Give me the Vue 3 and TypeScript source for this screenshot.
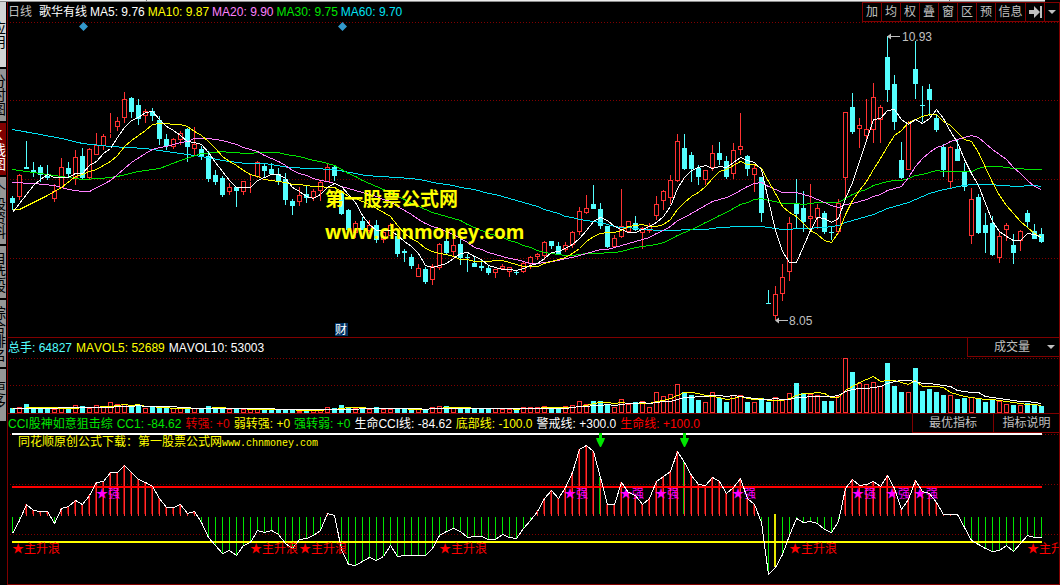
<script setup lang="ts">
type Candle = [kind: 'u' | 'd', high: number, top: number, bottom: number, low: number]
type Point = [x: number, y: number]

const candleSource = `
d196,198,203,210 u174,175,197,200 d141,167,169,169 d162,170,172,177 d165,167,175,182 d165,176,178,180
u184,191,199,202 u158,167,188,188 d162,168,174,178 u150,157,178,185 d148,156,178,179 u148,149,178,180
u133,145,155,155 u134,136,146,150 u113,133,134,138 u117,121,127,131 u92,99,118,123 d97,98,112,118
d99,105,119,125 u109,111,116,123 d108,111,116,121 d116,120,139,145 d134,139,146,150 u138,139,147,149
u131,133,140,145 d128,129,147,162 u127,144,149,155 d146,149,157,160 d151,156,179,182 d170,175,182,185
d176,178,195,197 u183,187,192,195 d187,187,191,207 u181,181,192,195 u174,181,182,193 u161,162,177,178
d163,166,171,177 d163,169,174,175 d168,174,182,185 d173,179,200,205 d199,201,206,215 u187,195,202,206
d186,194,198,203 u189,191,198,201 u180,182,191,201 u164,167,182,182 d166,167,176,181 d190,193,214,215
d209,210,230,230 u221,223,233,238 d217,221,230,230 u220,225,231,233 d220,225,240,243 u230,232,240,243
u223,225,236,236 d234,236,254,257 d249,251,253,262 d254,257,266,269 u264,268,277,277 d267,269,282,284
u264,266,280,285 u243,244,268,270 d237,241,253,255 u238,245,252,256 d237,244,258,265 d254,257,258,272
d256,263,267,267 d260,266,268,271 d266,268,273,275 u269,269,273,278 u264,266,269,270 u267,267,272,277
d270,272,273,275 u262,263,272,273 u256,257,264,269 u253,254,257,260 u241,242,256,260 d241,241,246,249
d242,246,254,254 u242,245,250,252 u231,232,245,248 u207,211,232,235 u195,208,213,214 d185,204,209,209
d203,209,226,229 d226,226,247,248 u235,238,247,247 u189,226,237,238 u221,221,232,232 d216,223,230,231
u227,228,233,249 u223,226,231,233 u196,204,216,220 u190,191,201,210 u175,180,198,204 u134,141,181,182
d134,148,169,170 d152,155,169,182 d165,168,177,185 u170,170,180,185 u145,153,168,171 d142,153,160,165
d156,161,177,179 u143,150,174,179 u113,146,150,155 d155,156,169,176 u164,168,175,192 d177,177,213,222
d290,303,304,304 u286,294,316,320 u264,277,294,301 u217,223,272,281 d179,203,214,229 d191,208,222,232
u184,216,219,228 u204,208,218,229 d211,213,232,234 d226,232,233,240 u199,203,232,234 u112,112,178,200
d93,107,132,134 u118,125,129,148 u99,129,136,140 u83,97,130,143 u105,107,120,143 d36,57,90,102
d75,84,122,130 d142,160,178,179 u121,123,170,170 d41,69,84,99 d86,105,106,122 d84,89,100,116
d114,118,130,132 d144,147,170,177 u146,147,182,188 d139,149,161,161 d163,172,187,191 u188,199,236,244
d194,197,233,234 d213,225,233,253 d216,223,255,256 u232,236,258,263 u223,225,230,241 d234,245,253,264
u230,231,241,251 d210,213,222,228 d224,231,239,239 d228,234,242,243`

const candles: Candle[] = candleSource.trim().split(/\s+/).map((item) => {
  const [high, top, bottom, low] = item.slice(1).split(',').map(Number)
  return [item[0] as 'u' | 'd', high, top, bottom, low]
})

const volumes: number[] = `
408 407 404 408 408 408 409 408 409 405 406 408 405 407 402 404 404 406 406 408
407 408 408 408 408 408 408 408 406 407 408 409 409 409 409 408 409 409 409 410
410 411 410 409 409 407 408 405 408 408 408 409 407 409 409 408 409 409 408 409
407 406 406 408 408 408 408 408 408 408 409 409 409 407 407 407 406 408 408 406
405 401 404 401 401 404 407 399 404 402 401 407 392 396 394 384 392 395 400 402
392 398 402 395 395 402 402 398 402 397 400 393 383 393 394 395 401 401 396 358
372 383 384 382 386 363 386 392 392 368 391 389 392 395 395 399 398 397 399 402
399 401 404 405 405 403 405 406`.trim().split(/\s+/).map(Number)

const cci: number[] = `
533 520 504 510 511 511 523 508 506 500 504 495 482 481 472 472 465 472 479 482
486 498 507 507 504 513 511 522 537 545 553 550 555 545 542 530 532 530 534 543
548 539 538 535 530 513 515 549 564 565 561 557 560 556 545 556 555 555 555 555
548 535 531 528 531 537 536 536 539 539 534 537 538 528 520 511 498 490 498 487
472 449 445 451 477 504 504 482 492 495 504 498 481 476 471 451 462 475 484 485
477 481 493 487 478 498 504 522 574 567 554 535 518 522 521 523 529 532 521 488
479 485 484 481 486 475 488 509 499 480 491 493 502 514 514 514 527 540 544 548
551 550 545 551 543 535 537 537`.trim().split(/\s+/).map(Number)

const xAt = (i: number): number => 12 + 7 * i
const toPoints = (list: Point[]): string => list.map((p) => p.join(',')).join(' ')

function average(values: number[], span: number, lead: Point[]): string {
  const result: Point[] = [...lead]
  for (let i = span - 1; i < values.length; i++) {
    const sum = values.slice(i - span + 1, i + 1).reduce((a, b) => a + b, 0)
    result.push([xAt(i), Math.round(sum / span)])
  }
  return toPoints(result)
}

const closes = candles.map(([kind, , top, bottom]) => (kind === 'u' ? top : bottom))

const priceLines = [
  { cls: 'cyan-line', points: average(closes, 60, [[12, 129], [40, 134], [61, 138], [82, 143], [110, 146], [145, 148], [166, 151], [201, 156], [222, 160], [245, 163], [264, 163], [288, 167], [334, 169], [365, 175], [411, 178]]) },
  { cls: 'green-line', points: average(closes, 30, [[12, 169], [40, 173], [61, 176], [82, 179], [100, 178], [117, 176], [138, 171], [159, 168], [180, 160], [201, 153]]) },
  { cls: 'pink-line', points: average(closes, 20, [[12, 182], [33, 183], [54, 185], [68, 189], [82, 191], [89, 191], [110, 180], [131, 162]]) },
  { cls: 'yellow-line', points: average(closes, 10, [[12, 209], [19, 209], [33, 202], [47, 195], [61, 187]]) },
  { cls: 'white-line', points: average(closes, 5, [[12, 212], [19, 203], [33, 185]]) },
]
const volumeLines = [
  { cls: 'yellow-line', points: average(volumes, 5, [[12, 408]]) },
  { cls: 'white-line', points: average(volumes, 10, [[12, 408], [40, 408]]) },
]
const cciPoints = toPoints(cci.map((y, i): Point => [xAt(i), y]))

const averages = [
  { cls: 'white', text: 'MA5: 9.76' },
  { cls: 'yellow', text: 'MA10: 9.87' },
  { cls: 'pink', text: 'MA20: 9.90' },
  { cls: 'green', text: 'MA30: 9.75' },
  { cls: 'cyan', text: 'MA60: 9.70' },
]
const readings = [
  { cls: 'green', text: 'CCI股神如意狙击综' },
  { cls: 'green', text: 'CC1: -84.62' },
  { cls: 'crimson', text: '转强: +0' },
  { cls: 'yellow', text: '弱转强: +0' },
  { cls: 'green', text: '强转弱: +0' },
  { cls: 'white', text: '生命CCI线: -84.62' },
  { cls: 'yellow', text: '底部线: -100.0' },
  { cls: 'white', text: '警戒线: +300.0' },
  { cls: 'red', text: '生命线: +100.0' },
]
const tools = ['加', '均', '权', '叠', '窗', '区', '预', '信息']
const tabs = [
  { cls: 'tab-light', text: '应用' },
  { cls: 'tab-short', text: '分时图' },
  { cls: 'tab-short tab-active', text: 'K线图' },
  { cls: 'tab-tall', text: '个股资料' },
  { cls: 'tab-short', text: '自选股' },
  { cls: 'tab-tall', text: '综合排名' },
  { cls: 'tab-short', text: '更多' },
]
const strongMarks = [96, 564, 620, 655, 732, 852, 886, 914]
const waveMarks = [12, 250, 299, 439, 789, 1027]
const sellMarks = [600, 684]
</script>

<template>
  <div class="terminal">
    <div class="top-strip"><i></i><i></i></div>
    <div class="workspace">
      <nav class="side">
        <button v-for="tab in tabs" :key="tab.text" class="tab" :class="tab.cls" type="button">{{ tab.text }}</button>
      </nav>
      <main class="panels">
        <section class="panel">
          <header class="bar price-bar">
            <div class="legend tight">
              <span class="silver period">日线</span>
              <span class="white">歌华有线</span>
              <span v-for="item in averages" :key="item.text" :class="item.cls">{{ item.text }}</span>
            </div>
            <div class="tools">
              <button v-for="tool in tools" :key="tool" type="button" class="tool" :class="{ wide: tool.length > 1 }">{{ tool }}</button>
              <button type="button" class="tool" aria-label="到最新">
                <svg width="13" height="12" viewBox="0 0 13 12"><path d="M0 4h5V0l6 6-6 6V8H0zM11 0h2v12h-2z" fill="#c0c0c0" /></svg>
              </button>
              <button type="button" class="tool narrow" aria-label="更多">
                <svg width="8" height="4" viewBox="0 0 8 4"><path d="M0 0h8L4 4z" fill="#c0c0c0" /></svg>
              </button>
            </div>
          </header>
          <svg class="plot" viewBox="8 22 1051 315">
            <path class="grid" d="M10 22.5H1059M10 100.5H1059M10 179.5H1059M10 258.5H1059" />
            <g v-for="([kind, high, top, bottom, low], i) in candles" :key="i" class="crisp">
              <template v-if="kind === 'u'">
                <path class="rise" :d="`M${xAt(i) + 0.5} ${high}V${top}M${xAt(i) + 0.5} ${bottom}V${low}`" />
                <rect class="rise" :x="xAt(i) - 1.5" :y="top + 0.5" width="4" :height="Math.max(bottom - top - 1, 0)" />
              </template>
              <template v-else>
                <rect class="fall" :x="xAt(i)" :y="high" width="1" :height="low - high" />
                <rect class="fall" :x="xAt(i) - 2" :y="top" width="5" :height="Math.max(bottom - top, 1)" />
              </template>
            </g>
            <g class="crisp" transform="translate(.5 .5)">
              <polyline v-for="line in priceLines" :key="line.cls" :class="line.cls" :points="line.points" />
            </g>
            <path fill="#3399cc" d="M83.500 22l4.500 4.500-4.500 4.500-4.500-4.500zM342.500 22l4.500 4.500-4.500 4.500-4.500-4.500z" />
            <path class="pointer" d="M888 36.500H900M776 320.500H788" />
            <path fill="#c0c0c0" d="M887 36.500l4-3v6zM775 320.500l4-3v6z" />
            <text class="price" x="902" y="41">10.93</text>
            <text class="price" x="789" y="325">8.05</text>
            <text class="mark-cn" x="325" y="206">第一股票公式网</text>
            <text class="mark-en" x="325" y="239">www.chnmoney.com</text>
            <rect x="335" y="323" width="13" height="13" fill="#003366" />
            <text class="note" x="335" y="334">财</text>
          </svg>
        </section>

        <section class="panel ruled">
          <header class="bar">
            <div class="legend">
              <span class="aqua">总手: 64827</span>
              <span class="yellow">MAVOL5: 52689</span>
              <span class="white">MAVOL10: 53003</span>
            </div>
            <div class="picker">
              <select aria-label="指标"><option>成交量</option></select>
              <svg width="8" height="4" viewBox="0 0 8 4"><path d="M0 0h8L4 4z" fill="#c0c0c0" /></svg>
            </div>
          </header>
          <svg class="plot" viewBox="8 357 1051 56">
            <path class="grid" d="M10 358.500H1059M10 385.500H1059" />
            <g class="crisp">
              <template v-for="(top, i) in volumes" :key="i">
                <rect v-if="candles[i][0] === 'u'" class="rise" :x="xAt(i) - 1.5" :y="top + 0.5" width="4" :height="412 - top" />
                <rect v-else class="fall" :x="xAt(i) - 2" :y="top" width="5" :height="413 - top" />
              </template>
            </g>
            <g class="crisp" transform="translate(.5 .5)">
              <polyline v-for="line in volumeLines" :key="line.cls" :class="line.cls" :points="line.points" />
            </g>
          </svg>
        </section>

        <section class="panel ruled last">
          <header class="bar">
            <div class="legend">
              <span v-for="item in readings" :key="item.text" :class="item.cls">{{ item.text }}</span>
            </div>
            <div class="actions">
              <button type="button" class="action">最优指标</button>
              <button type="button" class="action">指标说明</button>
            </div>
          </header>
          <svg class="plot" viewBox="8 433 1051 151">
            <path class="grid" d="M10 434.500H1059M10 484.500H1059M10 534.500H1059" />
            <g class="crisp">
              <template v-for="(y, i) in cci" :key="i">
                <template v-if="y < 516">
                  <rect :x="xAt(i) - 1" :y="y" width="1" :height="Math.max(514 - y, 0)" fill="#a80000" />
                  <rect :x="xAt(i)" :y="y" width="1" :height="516 - y" fill="#ff3232" />
                </template>
                <rect v-else :x="xAt(i)" y="517" width="1" :height="y - 517" fill="#00e600" />
              </template>
              <rect x="599" y="477" width="1" height="37" fill="#00c800" />
              <rect x="683" y="462" width="1" height="52" fill="#00c800" />
              <rect x="774" y="514" width="2" height="53" fill="#e6e600" />
              <rect x="12" y="433" width="1030" height="2" fill="#fff" />
              <rect x="12" y="486" width="1030" height="2" fill="#f00" />
              <rect x="12" y="541" width="1030" height="2" fill="#ff0" />
            </g>
            <text v-for="x in strongMarks" :key="x" class="strong" :x="x" y="498">★强</text>
            <g class="crisp" transform="translate(.5 .5)"><polyline class="white-line" :points="cciPoints" /></g>
            <path v-for="x in sellMarks" :key="x" fill="#00e600" :d="`M${x - 1} 433h3v5h3l-1 3-3 6h-1l-3-6-1-3h3z`" />
            <text v-for="x in waveMarks" :key="x" class="wave" :x="x" y="553">★主升浪</text>
            <text class="title" x="18" y="446">同花顺原创公式下载：第一股票公式网<tspan class="site">www.chnmoney.com</tspan></text>
          </svg>
        </section>
      </main>
    </div>
  </div>
</template>

<style>
body {
  margin: 0;
  background: #000;
}
</style>

<style scoped>
.terminal {
  background: #000;
  color: #c0c0c0;
  font: 12px/18px "Liberation Sans", "Noto Sans CJK SC", sans-serif;
  font-kerning: none;
  overflow: hidden;
}
button,
select {
  margin: 0;
  padding: 0;
  border: 0;
  background: transparent;
  color: #c0c0c0;
  font: inherit;
}
.top-strip {
  display: flex;
  justify-content: space-between;
  box-sizing: border-box;
  height: 2px;
  margin-right: 15px;
  padding: 0 95px 0 146px;
  background: #ececec;
  border-bottom: 1px solid #8c8c8c;
}
.top-strip i {
  width: 1px;
  background: #777;
}
.workspace {
  display: flex;
}
.side {
  flex: 0 0 6px;
  display: flex;
  flex-direction: column;
  gap: 2px;
  margin-right: 1px;
  overflow: hidden;
}
.tab {
  display: flex;
  align-items: flex-start;
  justify-content: center;
  width: 6px;
  background: #969696;
  color: #000;
  font-size: 14px;
  line-height: 16px;
  white-space: nowrap;
  writing-mode: vertical-rl;
  text-orientation: upright;
  overflow: hidden;
}
.tab-light {
  height: 65px;
  background: #d4d4d4;
}
.tab-short {
  height: 52px;
}
.tab-tall {
  height: 67px;
}
.tab-active {
  background: #800000;
  color: #fff;
}
.panels {
  flex: 1;
  min-width: 0;
  border-left: 1px solid #800000;
  border-right: 1px solid #800000;
}
.ruled {
  border-top: 1px solid #800000;
}
.last {
  border-bottom: 1px solid #800000;
}
.bar {
  display: flex;
  justify-content: space-between;
  height: 19px;
}
.price-bar {
  height: 20px;
}
.legend {
  display: flex;
  align-items: center;
  gap: 4px;
  white-space: nowrap;
}
.tight {
  gap: 3px;
}
.period {
  margin-right: 4px;
}
.tools,
.actions {
  display: flex;
}
.tool {
  display: flex;
  align-items: center;
  justify-content: center;
  box-sizing: border-box;
  width: 19px;
  border: 1px solid #800000;
  border-right: 0;
}
.wide {
  width: 30px;
}
.narrow {
  width: 15px;
}
.picker {
  position: relative;
  box-sizing: border-box;
  width: 92px;
  border-left: 1px solid #800000;
  border-bottom: 1px solid #800000;
}
.picker select {
  appearance: none;
  width: 100%;
  height: 18px;
  padding-left: 26px;
  outline: 0;
}
.picker svg {
  position: absolute;
  right: 4px;
  top: 7px;
}
.action {
  box-sizing: border-box;
  width: 66px;
  border-left: 1px solid #800000;
  border-bottom: 1px solid #800000;
}
.action:first-child {
  width: 81px;
}
.plot {
  display: block;
  width: 100%;
  height: auto;
}
.crisp {
  shape-rendering: crispEdges;
}
.grid {
  stroke: #800000;
  stroke-dasharray: 1 2;
  shape-rendering: crispEdges;
}
.rise {
  fill: #000;
  stroke: #ff3232;
}
.fall {
  fill: #54ffff;
}
polyline {
  fill: none;
}
.white-line { stroke: #fff; }
.yellow-line { stroke: #ff0; }
.pink-line { stroke: #ff80ff; }
.green-line { stroke: #00e600; }
.cyan-line { stroke: #02e2f4; }
.pointer { stroke: #c0c0c0; }
.price { fill: #c0c0c0; }
.note { fill: #fff; }
.white { color: #fff; }
.silver { color: #c0c0c0; }
.yellow { color: #ff0; }
.pink { color: #ff80ff; }
.green { color: #00e600; }
.cyan { color: #02e2f4; }
.aqua { color: #54ffff; }
.crimson { color: #e00000; }
.red { color: #f00; }
.mark-cn {
  fill: #ff0;
  font: bold 19px "Noto Sans CJK SC", sans-serif;
}
.mark-en {
  fill: #ff0;
  font: bold 19px "Open Sans", sans-serif;
}
.strong { fill: #f0f; }
.wave { fill: #f00; }
.title { fill: #ff0; }
.site {
  font-family: "Liberation Mono", monospace;
  font-size: 10px;
}
</style>
